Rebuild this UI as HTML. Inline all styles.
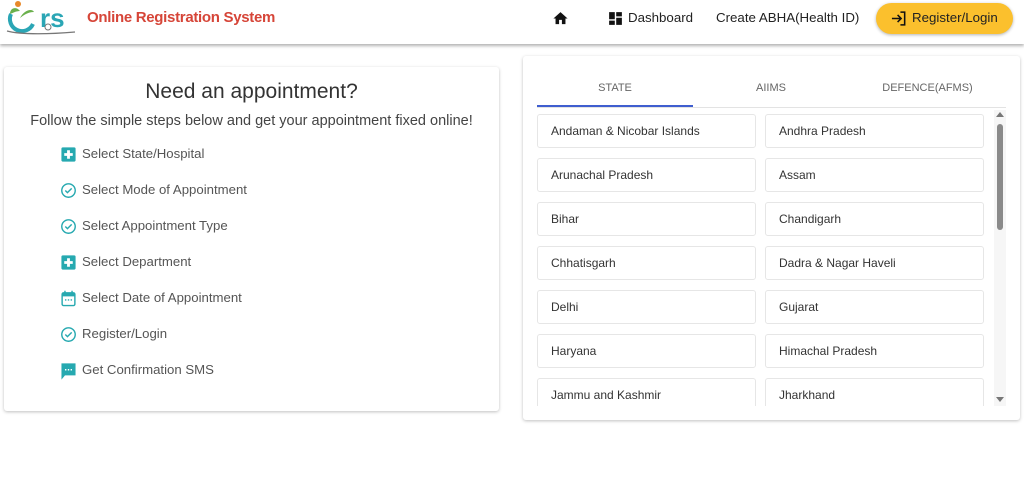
<!DOCTYPE html>
<html><head><meta charset="utf-8"><style>
*{margin:0;padding:0;box-sizing:border-box}
body{width:1024px;height:477px;background:#fff;font-family:"Liberation Sans",sans-serif;position:relative;overflow:hidden}
.hdr{position:absolute;left:0;top:0;width:1024px;height:44px;background:#fff;box-shadow:0 2px 3px rgba(0,0,0,.3)}
.t{position:absolute;white-space:nowrap}
.card{position:absolute;background:#fff;box-shadow:0 1px 3px rgba(0,0,0,.25);border-radius:3px}
.li{position:absolute;left:82px;font-size:13.2px;color:#555}
svg.ic{position:absolute;left:60px;width:17px;height:17px}
.st{position:absolute;width:219px;height:34px;border:1px solid #e6e6e6;border-radius:3px;font-size:12px;color:#333;padding:9px 0 0 13px}
</style></head><body>
<div class="hdr">
<svg class="t" style="left:4px;top:0" width="72" height="40" viewBox="0 0 72 40">
<circle cx="14" cy="4" r="3" fill="#e8892b"/>
<path d="M6 14c0-6 6-8 10-3c-4 0-7 2-10 3z" fill="#6ab04c"/>
<path d="M16 18c4-8 12-10 14-6c-6 0-10 3-14 6z" fill="#6ab04c"/>
<path d="M7 14a12 12 0 0 0 22 10" stroke="#2ba6b5" stroke-width="4" fill="none"/>
<text x="36" y="27" font-size="26" font-weight="bold" fill="#2ba6b5" font-family="Liberation Sans">rs</text>
<path d="M3 31c15 4 45 3 68 1" stroke="#777" stroke-width="1.2" fill="none"/>
<circle cx="44" cy="27" r="3" fill="none" stroke="#777"/>
</svg>
<div class="t" style="left:87px;top:9px;font-size:15px;color:#d64538;font-weight:bold;letter-spacing:-.3px">Online Registration System</div>
<svg class="t" style="left:552px;top:10px" width="17" height="17" viewBox="0 0 24 24"><path d="M10 20v-6h4v6h5v-8h3L12 3 2 12h3v8z" fill="#111"/></svg>
<svg class="t" style="left:607px;top:10px" width="17" height="17" viewBox="0 0 24 24"><path d="M3 13h8V3H3zm0 8h8v-6H3zm10 0h8V11h-8zm0-18v6h8V3z" fill="#111"/></svg>
<div class="t" style="left:628px;top:10px;font-size:13.3px;color:#222">Dashboard</div>
<div class="t" style="left:716px;top:10px;font-size:13.3px;color:#222">Create ABHA(Health ID)</div>
<div class="t" style="left:876px;top:3px;width:137px;height:31px;background:#fbc02d;border-radius:16px;box-shadow:0 1px 3px rgba(0,0,0,.3)"></div>
<svg class="t" style="left:890px;top:10px" width="18" height="17" viewBox="0 0 24 24"><path d="M2 12h12M10 7l5 5-5 5M14 3h6v18h-6" stroke="#111" stroke-width="2.2" fill="none"/></svg>
<div class="t" style="left:912px;top:10px;font-size:13.3px;color:#222">Register/Login</div>
</div>

<div class="card" style="left:4px;top:67px;width:495px;height:344px"></div>
<div class="t" style="left:4px;width:495px;text-align:center;top:80px;font-size:21px;color:#333">Need an appointment?</div>
<div class="t" style="left:4px;width:495px;text-align:center;top:113px;font-size:14.5px;color:#444">Follow the simple steps below and get your appointment fixed online!</div>

<svg class="ic" style="top:146px" viewBox="0 0 24 24"><rect x="2" y="2" width="20" height="20" rx="2" fill="#26a9b0"/><path d="M12 6v12M6 12h12" stroke="#fff" stroke-width="4"/></svg>
<div class="li" style="top:146px">Select State/Hospital</div>
<svg class="ic" style="top:182px" viewBox="0 0 24 24"><circle cx="12" cy="12" r="9.5" stroke="#26a9b0" stroke-width="2" fill="none"/><path d="M7.5 12l3 3 6-6" stroke="#26a9b0" stroke-width="2" fill="none"/></svg>
<div class="li" style="top:182px">Select Mode of Appointment</div>
<svg class="ic" style="top:218px" viewBox="0 0 24 24"><circle cx="12" cy="12" r="9.5" stroke="#26a9b0" stroke-width="2" fill="none"/><path d="M7.5 12l3 3 6-6" stroke="#26a9b0" stroke-width="2" fill="none"/></svg>
<div class="li" style="top:218px">Select Appointment Type</div>
<svg class="ic" style="top:254px" viewBox="0 0 24 24"><rect x="2" y="2" width="20" height="20" rx="2" fill="#26a9b0"/><path d="M12 6v12M6 12h12" stroke="#fff" stroke-width="4"/></svg>
<div class="li" style="top:254px">Select Department</div>
<svg class="ic" style="top:290px" viewBox="0 0 24 24"><rect x="3" y="4" width="18" height="18" rx="2" fill="none" stroke="#26a9b0" stroke-width="2"/><rect x="3" y="4" width="18" height="5" fill="#26a9b0"/><path d="M7 1v4M17 1v4" stroke="#26a9b0" stroke-width="2"/><path d="M7 14h2M11 14h2M15 14h2" stroke="#26a9b0" stroke-width="2"/></svg>
<div class="li" style="top:290px">Select Date of Appointment</div>
<svg class="ic" style="top:326px" viewBox="0 0 24 24"><circle cx="12" cy="12" r="9.5" stroke="#26a9b0" stroke-width="2" fill="none"/><path d="M7.5 12l3 3 6-6" stroke="#26a9b0" stroke-width="2" fill="none"/></svg>
<div class="li" style="top:326px">Register/Login</div>
<svg class="ic" style="top:362px;height:19px" viewBox="0 0 24 27"><path d="M2 2h20v17H7l-5 6z" fill="#26a9b0"/><path d="M7 11h2M11 11h2M15 11h2" stroke="#fff" stroke-width="2"/></svg>
<div class="li" style="top:362px">Get Confirmation SMS</div>

<div class="card" style="left:523px;top:56px;width:497px;height:364px"></div>
<div class="t" style="left:537px;width:156px;text-align:center;top:82px;font-size:11px;color:#666">STATE</div>
<div class="t" style="left:693px;width:156px;text-align:center;top:82px;font-size:11px;color:#666">AIIMS</div>
<div class="t" style="left:849px;width:157px;text-align:center;top:82px;font-size:11px;color:#666">DEFENCE(AFMS)</div>
<div class="t" style="left:537px;top:107px;width:469px;height:1px;background:#e3e3e3"></div>
<div class="t" style="left:537px;top:105px;width:156px;height:2px;background:#3f5ecf"></div>
<div class="t" style="left:530px;top:110px;width:480px;height:296px;overflow:hidden">
<div class="st" style="left:7px;top:4px">Andaman &amp; Nicobar Islands</div><div class="st" style="left:235px;top:4px">Andhra Pradesh</div>
<div class="st" style="left:7px;top:48px">Arunachal Pradesh</div><div class="st" style="left:235px;top:48px">Assam</div>
<div class="st" style="left:7px;top:92px">Bihar</div><div class="st" style="left:235px;top:92px">Chandigarh</div>
<div class="st" style="left:7px;top:136px">Chhatisgarh</div><div class="st" style="left:235px;top:136px">Dadra &amp; Nagar Haveli</div>
<div class="st" style="left:7px;top:180px">Delhi</div><div class="st" style="left:235px;top:180px">Gujarat</div>
<div class="st" style="left:7px;top:224px">Haryana</div><div class="st" style="left:235px;top:224px">Himachal Pradesh</div>
<div class="st" style="left:7px;top:268px">Jammu and Kashmir</div><div class="st" style="left:235px;top:268px">Jharkhand</div>
<div class="t" style="left:464px;top:0;width:12px;height:296px;background:#f6f6f6"></div>
<div class="t" style="left:467px;top:14px;width:6px;height:106px;background:#8a8a8a;border-radius:3px"></div>
<div class="t" style="left:466px;top:2px;width:0;height:0;border-left:4px solid transparent;border-right:4px solid transparent;border-bottom:5px solid #777"></div>
<div class="t" style="left:466px;top:287px;width:0;height:0;border-left:4px solid transparent;border-right:4px solid transparent;border-top:5px solid #777"></div>
</div>
</body></html>
